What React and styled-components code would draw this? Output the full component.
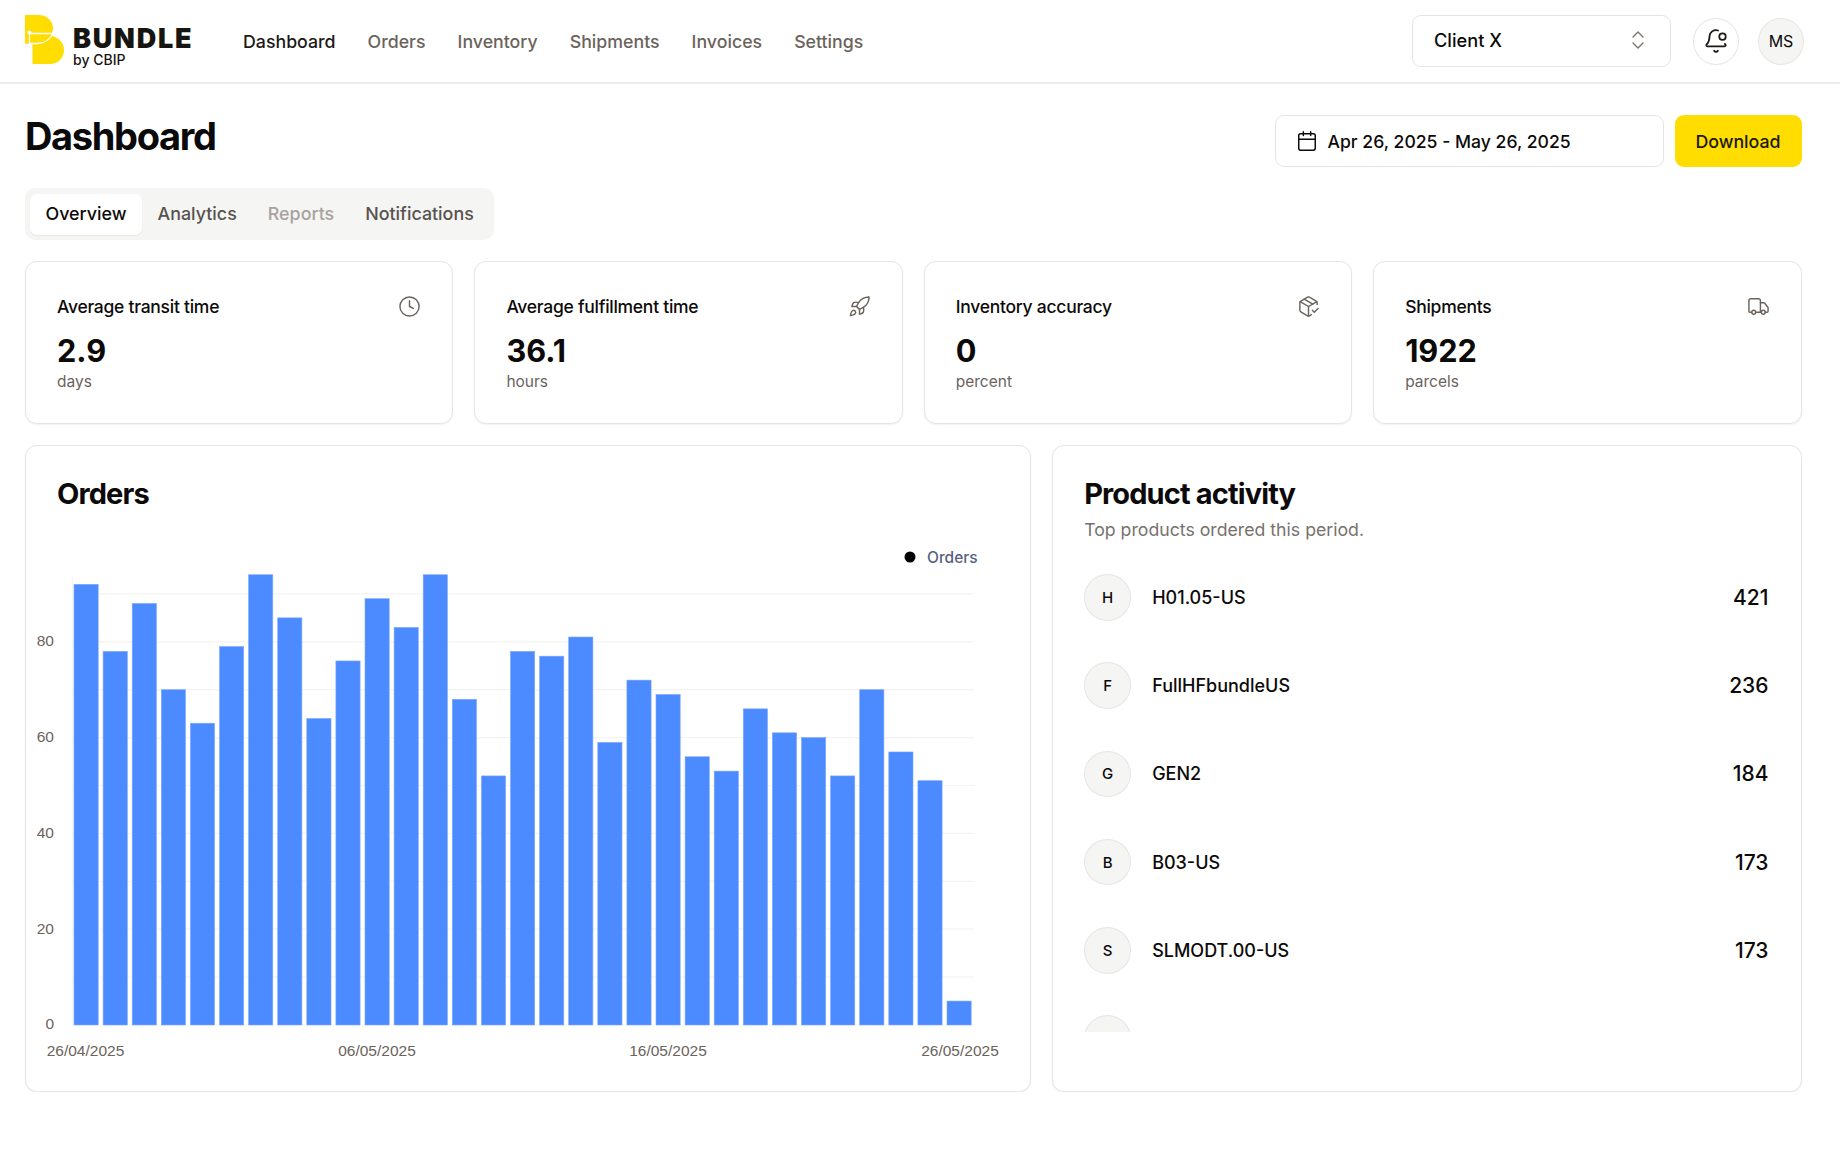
import styled, { createGlobalStyle } from 'styled-components';
import {
  BellDot,
  Calendar,
  ChevronsUpDown,
  Clock,
  PackageCheck,
  Rocket,
  Truck,
} from 'lucide-react';

const navItems = ['Dashboard', 'Orders', 'Inventory', 'Shipments', 'Invoices', 'Settings'];

const tabs = [
  { label: 'Overview', state: 'active' },
  { label: 'Analytics' },
  { label: 'Reports', state: 'disabled' },
  { label: 'Notifications' },
];

const stats = [
  { label: 'Average transit time', value: '2.9', unit: 'days', Icon: Clock },
  { label: 'Average fulfillment time', value: '36.1', unit: 'hours', Icon: Rocket },
  { label: 'Inventory accuracy', value: '0', unit: 'percent', Icon: PackageCheck },
  { label: 'Shipments', value: '1922', unit: 'parcels', Icon: Truck },
];

const products = [
  { letter: 'H', name: 'H01.05-US', count: 421 },
  { letter: 'F', name: 'FullHFbundleUS', count: 236 },
  { letter: 'G', name: 'GEN2', count: 184 },
  { letter: 'B', name: 'B03-US', count: 173 },
  { letter: 'S', name: 'SLMODT.00-US', count: 173 },
];

const orders = [
  92, 78, 88, 70, 63, 79, 94, 85, 64, 76, 89, 83, 94, 68, 52, 78, 77, 81, 59, 72, 69, 56, 53, 66,
  61, 60, 52, 70, 57, 51, 5,
];

// chart geometry, in page pixels (the svg viewBox starts at the card's inner corner)
const BASE_Y = 1025;
const UNIT = 4.79;
const FIRST_X = 74;
const PITCH = 29.1;
const BAR_W = 24.2;
const yTicks = [0, 20, 40, 60, 80];
const gridLines = [10, 20, 30, 40, 50, 60, 70, 80, 90];
const xLabels = [
  { text: '26/04/2025', x: 85.5 },
  { text: '06/05/2025', x: 377 },
  { text: '16/05/2025', x: 668 },
  { text: '26/05/2025', x: 960 },
];

function Logo() {
  return (
    <LogoMark viewBox="25 15 40 50" aria-hidden="true">
      <path
        d="M25 15H39C47 15 53 21 53 28C53 31 52 33 51 35.500C59 37.500 64 43 64 50C64 58 58 64 50 64H32.500V43.700H25Z"
        fill="#ffdd00"
      />
      <path
        d="M29.500 32.500V43.500H37C44 43.500 50 39 53.500 33.500H29.500"
        fill="none"
        stroke="#fff"
        strokeWidth="1.300"
      />
      <circle cx="29.500" cy="32.500" r="2" fill="#fff" />
    </LogoMark>
  );
}

function OrdersChart() {
  return (
    <ChartSvg viewBox="26 525 1004 550">
      <line x1="72.500" y1="575" x2="72.500" y2={BASE_Y} stroke="#f5f5f4" />
      {gridLines.map((v) => (
        <line
          key={v}
          x1="73"
          x2="974"
          y1={BASE_Y - v * UNIT}
          y2={BASE_Y - v * UNIT}
          stroke="#f3f3f2"
          strokeWidth="1.200"
        />
      ))}
      {orders.map((v, i) => (
        <rect
          key={i}
          x={FIRST_X + i * PITCH}
          y={BASE_Y - v * UNIT}
          width={BAR_W}
          height={v * UNIT}
          fill="#4c8aff"
          stroke="#7ba8ff"
          strokeWidth="0.600"
        />
      ))}
      {yTicks.map((v) => (
        <AxisText
          key={v}
          x="54"
          y={BASE_Y - v * UNIT - (v === 0 ? 2 : 1)}
          textAnchor="end"
          dominantBaseline="central"
        >
          {v}
        </AxisText>
      ))}
      {xLabels.map((l) => (
        <AxisText key={l.text} x={l.x} y="1050" textAnchor="middle" dominantBaseline="central">
          {l.text}
        </AxisText>
      ))}
      <circle cx="910" cy="557" r="5.500" fill="#000" />
      <LegendText x="927" y="557" dominantBaseline="central">
        Orders
      </LegendText>
    </ChartSvg>
  );
}

export default function App() {
  return (
    <>
      <GlobalStyle />
      <Header>
        <Brand>
          <Logo />
          <Wordmark>
            <strong>BUNDLE</strong>
            <span>by CBIP</span>
          </Wordmark>
        </Brand>
        <Nav>
          {navItems.map((item, i) => (
            <NavLink key={item} $active={i === 0}>
              {item}
            </NavLink>
          ))}
        </Nav>
        <HeaderRight>
          <ClientSelect>
            Client X
            <ChevronsUpDown size={24} strokeWidth={1.4} color="#78716c" />
          </ClientSelect>
          <RoundButton>
            <BellDot size={26} strokeWidth={1.6} color="#1c1917" />
          </RoundButton>
          <UserBadge>MS</UserBadge>
        </HeaderRight>
      </Header>
      <Main>
        <TitleRow>
          <PageTitle>Dashboard</PageTitle>
          <TitleActions>
            <DateRange>
              <Calendar size={22} strokeWidth={1.6} />
              Apr 26, 2025 - May 26, 2025
            </DateRange>
            <DownloadButton>Download</DownloadButton>
          </TitleActions>
        </TitleRow>
        <TabList>
          {tabs.map((tab) => (
            <Tab key={tab.label} $state={tab.state}>
              {tab.label}
            </Tab>
          ))}
        </TabList>
        <StatGrid>
          {stats.map(({ label, value, unit, Icon }) => (
            <StatCard key={label}>
              <StatHead>
                {label}
                <Icon size={23} strokeWidth={1.5} color="#6b635c" />
              </StatHead>
              <StatValue>{value}</StatValue>
              <StatUnit>{unit}</StatUnit>
            </StatCard>
          ))}
        </StatGrid>
        <PanelGrid>
          <OrdersPanel>
            <PanelTitle>Orders</PanelTitle>
            <OrdersChart />
          </OrdersPanel>
          <ProductsPanel>
            <PanelTitle>Product activity</PanelTitle>
            <PanelNote>Top products ordered this period.</PanelNote>
            <ProductList>
              {products.map((p) => (
                <ProductRow key={p.name}>
                  <ProductBadge>{p.letter}</ProductBadge>
                  <ProductName>{p.name}</ProductName>
                  <ProductCount>{p.count}</ProductCount>
                </ProductRow>
              ))}
              <ProductRow>
                <ProductBadge />
              </ProductRow>
            </ProductList>
          </ProductsPanel>
        </PanelGrid>
      </Main>
    </>
  );
}

const GlobalStyle = createGlobalStyle`
  * {
    box-sizing: border-box;
  }

  body {
    margin: 0;
    background: #fff;
    color: #0c0a09;
    font-family: Inter, 'Liberation Sans', sans-serif;
  }
`;

const Header = styled.header`
  display: flex;
  align-items: center;
  height: 84px;
  padding: 0 36px 0 25px;
  border-bottom: 2px solid #ececeb;
`;

const Brand = styled.div`
  display: flex;
  align-items: center;
  gap: 8px;
  width: 166px;
`;

const LogoMark = styled.svg`
  display: block;
  flex-shrink: 0;
  width: 40px;
  height: 50px;
  margin-top: -2px;
`;

const Wordmark = styled.div`
  display: flex;
  flex-direction: column;
  margin-top: 11px;

  strong {
    font-size: 27px;
    line-height: 26px;
    font-weight: 900;
    letter-spacing: 1.800px;
    color: #17150f;
  }

  span {
    font-size: 14px;
    line-height: 16px;
    font-weight: 500;
    color: #17150f;
  }
`;

const Nav = styled.nav`
  display: flex;
  gap: 32px;
  margin-left: 52px;
`;

const NavLink = styled.a`
  font-size: 17.750px;
  font-weight: 500;
  color: ${(p) => (p.$active ? '#1c1917' : '#6b635c')};
`;

const HeaderRight = styled.div`
  display: flex;
  align-items: center;
  margin-left: auto;
`;

const ClientSelect = styled.div`
  display: flex;
  align-items: center;
  justify-content: space-between;
  width: 259px;
  height: 52px;
  margin: -1px 22px 0 0;
  padding: 0 20px 2px 21px;
  border: 1.500px solid #e7e5e4;
  border-radius: 9px;
  font-size: 18.200px;
  font-weight: 500;
`;

const RoundButton = styled.div`
  display: flex;
  align-items: center;
  justify-content: center;
  width: 46px;
  height: 47px;
  margin-right: 19px;
  border: 1.500px solid #e7e5e4;
  border-radius: 50%;
`;

const UserBadge = styled.div`
  display: flex;
  align-items: center;
  justify-content: center;
  width: 46px;
  height: 47px;
  border: 1.500px solid #e7e5e4;
  border-radius: 50%;
  background: #f5f5f4;
  font-size: 16px;
  font-weight: 400;
`;

const Main = styled.main`
  padding: 31px 38.500px 0 25px;
`;

const TitleRow = styled.div`
  display: flex;
  justify-content: space-between;
  margin-bottom: 21px;
`;

const PageTitle = styled.h1`
  margin: 0;
  font-size: 38px;
  line-height: 42px;
  font-weight: 700;
  letter-spacing: -0.035em;
  color: #0a0a0a;
`;

const TitleActions = styled.div`
  display: flex;
  gap: 11px;
`;

const DateRange = styled.div`
  display: flex;
  align-items: center;
  gap: 10px;
  width: 389px;
  height: 52px;
  padding: 0 20px;
  border: 1.500px solid #e7e5e4;
  border-radius: 9px;
  font-size: 17.600px;
  font-weight: 500;
`;

const DownloadButton = styled.button`
  width: 127px;
  height: 52px;
  padding: 0;
  border: 0;
  border-radius: 9px;
  background: #ffdd00;
  color: #1c1917;
  font: 500 17.800px Inter, 'Liberation Sans', sans-serif;
`;

const TabList = styled.div`
  display: inline-flex;
  align-items: center;
  height: 52px;
  margin-bottom: 21px;
  padding: 0 5px;
  border-radius: 10px;
  background: #f5f5f4;
  vertical-align: top;
`;

const Tab = styled.div`
  display: flex;
  align-items: center;
  height: 41px;
  padding: 0 15.500px 1px;
  border-radius: 7px;
  font-size: 17.870px;
  font-weight: 500;
  color: ${(p) => (p.$state === 'disabled' ? '#a8a29e' : p.$state === 'active' ? '#0c0a09' : '#57534e')};
  background: ${(p) => (p.$state === 'active' ? '#fff' : 'transparent')};
  box-shadow: ${(p) => (p.$state === 'active' ? '0 1px 2px rgba(0, 0, 0, 0.06)' : 'none')};
`;

const Card = styled.section`
  border: 1.500px solid #e7e5e4;
  border-radius: 12px;
  background: #fff;
  box-shadow: 0 1px 2px rgba(0, 0, 0, 0.06);
`;

const StatGrid = styled.div`
  display: grid;
  grid-template-columns: repeat(4, 1fr);
  gap: 21px;
  margin-bottom: 21px;
`;

const StatCard = styled(Card)`
  height: 163px;
  padding: 32px 31px 31px;
`;

const StatHead = styled.div`
  display: flex;
  align-items: center;
  justify-content: space-between;
  height: 25px;
  font-size: 17.500px;
  font-weight: 500;
  letter-spacing: -0.015em;
`;

const StatValue = styled.div`
  margin-top: 14px;
  font-size: 30.700px;
  line-height: 36px;
  font-weight: 700;
`;

const StatUnit = styled.div`
  margin-top: 3px;
  font-size: 15.500px;
  line-height: 20px;
  color: #6b635c;
`;

const PanelGrid = styled.div`
  display: grid;
  grid-template-columns: repeat(7, 1fr);
  grid-template-rows: 647px;
  gap: 21px;
`;

const OrdersPanel = styled(Card)`
  grid-column: span 4;
  padding: 32px 31px 0;
`;

const ProductsPanel = styled(Card)`
  grid-column: span 3;
  padding: 32px 32px 0 31px;
`;

const PanelTitle = styled.h2`
  margin: 0;
  font-size: 29px;
  line-height: 32px;
  font-weight: 650;
  letter-spacing: -0.03em;
`;

const PanelNote = styled.p`
  margin: 8px 0 0;
  font-size: 17.700px;
  line-height: 24px;
  color: #78716c;
`;

const ChartSvg = styled.svg`
  display: block;
  width: 1004px;
  height: 550px;
  margin: 15px -31px 0;
`;

const AxisText = styled.text`
  font: 400 15.500px 'Liberation Sans', Arial, sans-serif;
  fill: #6b635c;
`;

const LegendText = styled.text`
  font: 500 15.500px Inter, 'Liberation Sans', sans-serif;
  fill: #55617f;
`;

const ProductList = styled.div`
  display: flex;
  flex-direction: column;
  gap: 41.800px;
  height: 458px;
  margin-top: 32px;
  overflow: hidden;
`;

const ProductRow = styled.div`
  display: flex;
  flex-shrink: 0;
  align-items: center;
  gap: 21px;
`;

const ProductBadge = styled.div`
  display: flex;
  flex-shrink: 0;
  align-items: center;
  justify-content: center;
  width: 47px;
  height: 46.500px;
  border: 1.500px solid #e7e5e4;
  border-radius: 50%;
  background: #f5f5f4;
  font-size: 15px;
  font-weight: 500;
`;

const ProductName = styled.span`
  font-size: 18px;
  font-weight: 500;
`;

const ProductCount = styled.span`
  margin-left: auto;
  font-size: 21px;
  font-weight: 500;
`;
